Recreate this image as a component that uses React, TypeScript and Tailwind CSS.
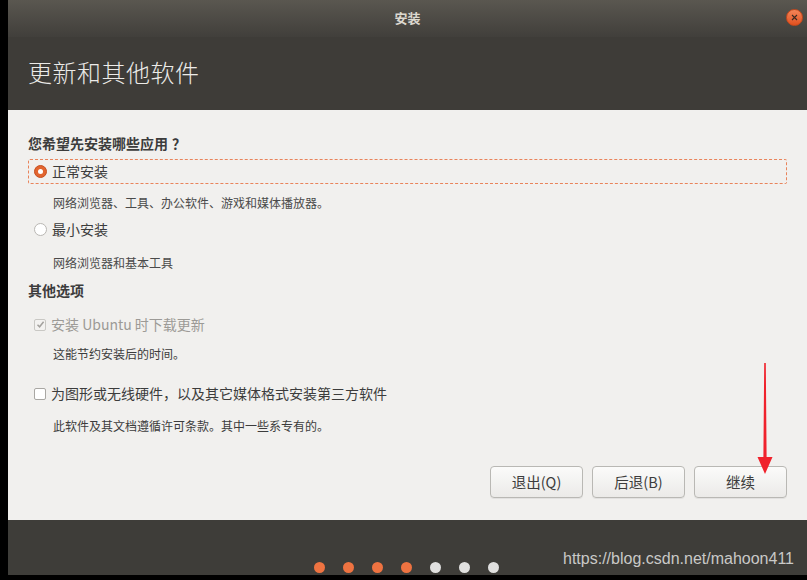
import React from 'react'

const cjk = { fontFamily: '"Noto Sans CJK SC", "Noto Sans", sans-serif' }

function Radio({ checked }: { checked?: boolean }) {
  if (checked) {
    return (
      <span className="w-[13px] h-[13px] rounded-full bg-[#e2652f] border border-[#c74f1f] flex items-center justify-center">
        <span className="w-[5px] h-[5px] rounded-full bg-white" />
      </span>
    )
  }
  return <span className="w-[13px] h-[13px] rounded-full bg-white border border-[#b9b7b3]" />
}

function Check({ disabled, checked }: { disabled?: boolean; checked?: boolean }) {
  return (
    <span
      className={
        'w-[12px] h-[12px] rounded-[2px] border flex items-center justify-center ' +
        (disabled ? 'border-[#c9c8c4] bg-[#f3f2f0]' : 'border-[#a9a7a3] bg-white')
      }
    >
      {checked && (
        <svg width="9" height="9" viewBox="0 0 9 9">
          <path d="M1.5 4.8 L3.6 6.8 L7.6 1.8" fill="none" stroke="#a3a19d" strokeWidth="1.5" />
        </svg>
      )}
    </span>
  )
}

function Btn({ label }: { label: string }) {
  return (
    <button className="w-[93px] h-[32px] rounded-[4px] border border-[#b9b8b4] bg-gradient-to-b from-[#fbfbfa] to-[#ebeae8] text-[14.5px] text-[#3c3c3c] shadow-[0_1px_0_rgba(0,0,0,0.06)]">
      {label}
    </button>
  )
}

export default function App() {
  const dots = ['o', 'o', 'o', 'o', 'g', 'g', 'g']
  return (
    <div className="w-[807px] h-[580px] bg-black flex overflow-hidden" style={cjk}>
      <div className="ml-[8px] flex-1 h-[575px] flex flex-col relative">
        {/* title bar */}
        <div className="h-[37px] bg-gradient-to-b from-[#5a5750] to-[#413f3b] flex items-center justify-center relative">
          <span className="text-[13px] font-bold text-[#dcd8cf] mt-[-1px]">安装</span>
          <span className="absolute right-[4px] top-[9px] w-[17px] h-[17px] rounded-full bg-gradient-to-b from-[#f48457] to-[#e0501d] border border-[#c9481b] flex items-center justify-center">
            <svg width="7" height="7" viewBox="0 0 7 7">
              <path d="M1 1 L6 6 M6 1 L1 6" stroke="#3a2a22" strokeWidth="1.1" />
            </svg>
          </span>
        </div>
        {/* header */}
        <div className="h-[73px] bg-[#3e3c38] flex items-center pl-[20px]">
          <span className="text-[24px] text-[#ecebe8] font-light tracking-[0.5px] mt-[-4px]">更新和其他软件</span>
        </div>
        {/* content */}
        <div className="h-[410px] bg-[#f1f0ee] pl-[20px] pr-[20px] pt-[23px] flex flex-col text-[#3c3c3c] relative">
          <div className="h-[20px] flex items-center text-[14px] font-bold">
            您希望先安装哪些应用<span className="ml-[4px]">？</span>
          </div>
          <div className="mt-[6px] h-[25px] border border-dashed border-[#e9835a] rounded-[2px] flex items-center pl-[5px] gap-[5px] text-[14px]">
            <Radio checked />
            <span>正常安装</span>
          </div>
          <div className="mt-[10px] h-[18px] flex items-center pl-[25px] text-[12px] text-[#4a4a4a]">
            网络浏览器、工具、办公软件、游戏和媒体播放器。
          </div>
          <div className="mt-[5px] h-[25px] flex items-center pl-[6px] gap-[5px] text-[14px]">
            <Radio />
            <span>最小安装</span>
          </div>
          <div className="mt-[12px] h-[18px] flex items-center pl-[25px] text-[12px] text-[#4a4a4a]">网络浏览器和基本工具</div>
          <div className="mt-[8px] h-[20px] flex items-center text-[14px] font-bold">其他选项</div>
          <div className="mt-[12px] h-[25px] flex items-center pl-[6px] gap-[5px] text-[14px] text-[#9c9a96]">
            <Check disabled checked />
            <span>安装 Ubuntu 时下载更新</span>
          </div>
          <div className="mt-[8px] h-[18px] flex items-center pl-[25px] text-[12px] text-[#3c3c3c]">这能节约安装后的时间。</div>
          <div className="mt-[18px] h-[25px] flex items-center pl-[6px] gap-[5px] text-[14px]">
            <Check />
            <span>为图形或无线硬件，以及其它媒体格式安装第三方软件</span>
          </div>
          <div className="mt-[11px] h-[18px] flex items-center pl-[25px] text-[12px] text-[#3c3c3c]">
            此软件及其文档遵循许可条款。其中一些系专有的。
          </div>
          <div className="mt-[31px] flex justify-end gap-[9px]">
            <Btn label="退出(Q)" />
            <Btn label="后退(B)" />
            <Btn label="继续" />
          </div>
          {/* annotation arrow */}
          <svg className="absolute left-[749px] top-[253px]" width="16" height="112" viewBox="0 0 16 112">
            <path d="M7.2 0 L8.8 0 L9.6 94 L15.5 94 L8 111 L0.5 94 L6.4 94 Z" fill="#f0222c" />
          </svg>
        </div>
        {/* footer */}
        <div className="h-[55px] bg-[#3e3d39] relative flex items-end justify-center pb-[2px]">
          <div className="flex gap-[18px] ml-[-2px]">
            {dots.map((d, i) => (
              <span
                key={i}
                className={'w-[11px] h-[11px] rounded-full ' + (d === 'o' ? 'bg-[#ee7341]' : 'bg-[#e0e0df]')}
              />
            ))}
          </div>
          <span
            className="absolute right-[13px] bottom-[4px] text-[16px] text-[#c9c9c7]"
            style={{ fontFamily: '"Liberation Sans", Arial, sans-serif' }}
          >
            https://blog.csdn.net/mahoon411
          </span>
        </div>
      </div>
    </div>
  )
}
